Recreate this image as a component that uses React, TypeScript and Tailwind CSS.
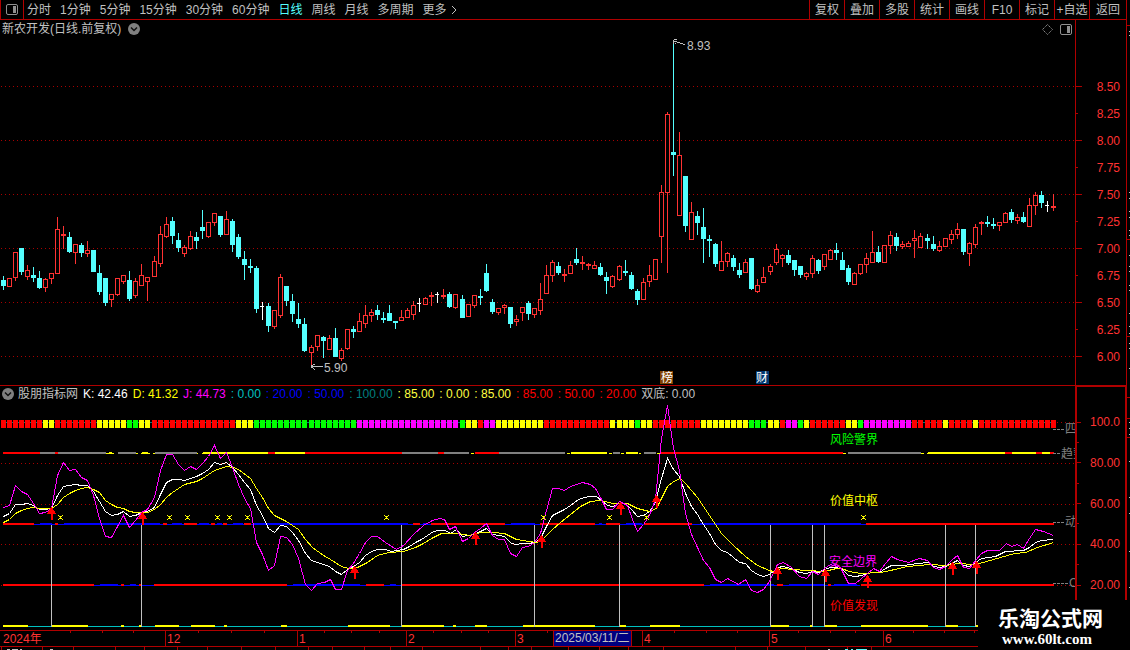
import { useState } from 'react';

type Kind = 'u' | 'd' | 'w';
type Candle = [Kind, number, number, number, number];
type Segment = [number, number, string];

const periods = ['分时', '1分钟', '5分钟', '15分钟', '30分钟', '60分钟', '日线', '周线', '月线', '多周期', '更多'];
const tools = ['复权', '叠加', '多股', '统计', '画线', 'F10', '标记', '+自选', '返回'];
const prices = ['8.50', '8.25', '8.00', '7.75', '7.50', '7.25', '7.00', '6.75', '6.50', '6.25', '6.00'];
const levels = ['100.0', '', '80.00', '', '60.00', '', '40.00', '', '20.00'];

const RED = '#ff3232';
const CYAN = '#54ffff';
const LINE = '#b00000';
const Y = '#ffff00';
const R = '#ff0000';
const B = '#0000ff';
const G = '#808080';

// kind, high, body top, body bottom, low
const candles: Candle[] = [
  ['d', 276, 280, 286, 290], ['u', 278, 278, 287, 287], ['u', 252, 252, 278, 281], ['d', 248, 248, 272, 275],
  ['u', 265, 270, 277, 280], ['d', 267, 275, 278, 282], ['d', 271, 278, 288, 289], ['u', 278, 279, 288, 292],
  ['u', 273, 273, 279, 284], ['u', 217, 229, 274, 274], ['u', 226, 234, 236, 249], ['d', 232, 237, 252, 253],
  ['u', 244, 244, 253, 264], ['d', 243, 245, 253, 257], ['u', 241, 250, 254, 257], ['d', 250, 250, 272, 272],
  ['d', 265, 273, 292, 295], ['d', 278, 278, 303, 306], ['u', 294, 294, 300, 307], ['u', 278, 278, 295, 296],
  ['u', 275, 275, 282, 284], ['d', 271, 280, 299, 301], ['u', 278, 281, 296, 298], ['u', 264, 275, 286, 286],
  ['u', 277, 277, 282, 301], ['u', 256, 261, 277, 277], ['u', 226, 234, 264, 267], ['u', 217, 224, 237, 238],
  ['d', 217, 221, 236, 244], ['d', 233, 240, 248, 252], ['u', 245, 247, 254, 257], ['u', 231, 236, 249, 250],
  ['d', 232, 237, 241, 249], ['d', 210, 227, 231, 239], ['u', 222, 222, 237, 238], ['u', 213, 213, 223, 226],
  ['d', 216, 216, 235, 237], ['u', 211, 219, 235, 235], ['d', 219, 221, 245, 252], ['d', 234, 237, 257, 259],
  ['d', 251, 259, 265, 280], ['d', 259, 266, 268, 273], ['d', 266, 268, 309, 313], ['w', 302, 306, 307, 320],
  ['d', 303, 306, 326, 332], ['u', 310, 310, 327, 329], ['u', 274, 277, 316, 318], ['d', 286, 286, 301, 306],
  ['d', 294, 301, 314, 322], ['d', 303, 319, 324, 328], ['d', 318, 324, 351, 352], ['u', 345, 347, 353, 366],
  ['u', 335, 335, 347, 351], ['d', 336, 337, 341, 358], ['u', 335, 338, 350, 350], ['d', 328, 338, 357, 357],
  ['u', 348, 350, 359, 361], ['u', 329, 329, 349, 350], ['d', 326, 329, 332, 338], ['u', 313, 321, 332, 332],
  ['u', 305, 315, 324, 328], ['u', 309, 312, 316, 322], ['d', 305, 310, 315, 320], ['d', 312, 318, 320, 323],
  ['d', 305, 313, 321, 321], ['d', 321, 321, 323, 329], ['u', 310, 317, 321, 321], ['u', 308, 310, 318, 318],
  ['u', 301, 305, 315, 320], ['w', 298, 303, 304, 312], ['u', 297, 298, 305, 305], ['u', 292, 295, 297, 306],
  ['w', 292, 294, 295, 303], ['u', 289, 295, 297, 299], ['d', 292, 294, 307, 308], ['u', 294, 294, 308, 309],
  ['d', 295, 299, 318, 318], ['u', 304, 304, 317, 317], ['u', 295, 295, 306, 308], ['d', 289, 296, 298, 305],
  ['d', 264, 273, 291, 292], ['d', 299, 302, 312, 314], ['u', 308, 308, 313, 315], ['u', 304, 305, 308, 314],
  ['d', 307, 307, 324, 328], ['u', 315, 319, 322, 326], ['u', 307, 307, 313, 321], ['d', 301, 303, 314, 320],
  ['u', 308, 308, 315, 318], ['u', 283, 299, 311, 315], ['u', 265, 275, 294, 294], ['u', 260, 262, 276, 282],
  ['d', 262, 266, 273, 275], ['u', 269, 274, 276, 282], ['u', 261, 265, 274, 274], ['d', 248, 259, 263, 265],
  ['u', 256, 262, 264, 270], ['u', 263, 264, 266, 270], ['u', 261, 265, 269, 269], ['d', 263, 267, 275, 276],
  ['d', 272, 277, 281, 294], ['u', 275, 276, 287, 288], ['u', 265, 266, 280, 281], ['d', 260, 271, 273, 276],
  ['d', 272, 275, 289, 290], ['d', 289, 291, 300, 305], ['u', 278, 282, 300, 300], ['u', 265, 275, 282, 287],
  ['u', 259, 259, 280, 280], ['u', 185, 192, 237, 263], ['u', 112, 114, 193, 273], ['d', 40, 152, 155, 176],
  ['u', 132, 155, 216, 216], ['d', 176, 176, 226, 232], ['u', 202, 212, 240, 240], ['d', 211, 216, 223, 235],
  ['d', 208, 227, 239, 263], ['d', 235, 239, 241, 257], ['d', 243, 244, 264, 267], ['u', 241, 261, 271, 271],
  ['u', 252, 253, 262, 267], ['d', 255, 258, 267, 271], ['d', 263, 270, 275, 278], ['u', 259, 262, 273, 273],
  ['d', 258, 258, 289, 290], ['u', 279, 285, 292, 293], ['u', 267, 277, 283, 283], ['u', 264, 266, 272, 275],
  ['u', 244, 249, 263, 265], ['u', 254, 255, 259, 267], ['d', 250, 255, 263, 265], ['d', 260, 260, 270, 276],
  ['d', 266, 266, 275, 278], ['u', 272, 273, 277, 280], ['u', 255, 258, 274, 278], ['d', 259, 260, 271, 274],
  ['u', 254, 254, 267, 270], ['u', 249, 250, 260, 260], ['d', 243, 250, 253, 260], ['d', 252, 260, 270, 270],
  ['d', 265, 268, 282, 285], ['u', 272, 273, 285, 285], ['u', 264, 264, 274, 275], ['u', 253, 258, 265, 273],
  ['u', 231, 252, 263, 263], ['d', 246, 252, 262, 263], ['u', 245, 245, 263, 263], ['u', 231, 235, 246, 254],
  ['d', 233, 237, 246, 251], ['u', 241, 244, 247, 249], ['u', 241, 243, 247, 247], ['u', 230, 238, 241, 258],
  ['u', 233, 236, 248, 248], ['d', 234, 238, 241, 249], ['d', 236, 244, 249, 251], ['u', 241, 246, 251, 252],
  ['u', 238, 238, 247, 247], ['u', 230, 234, 240, 244], ['u', 223, 229, 235, 239], ['d', 229, 229, 252, 255],
  ['u', 242, 243, 254, 266], ['u', 224, 227, 245, 248], ['u', 221, 222, 224, 235], ['d', 216, 222, 224, 227],
  ['d', 218, 224, 226, 229], ['u', 222, 222, 226, 231], ['u', 212, 213, 223, 223], ['d', 209, 212, 220, 223],
  ['u', 214, 217, 221, 224], ['d', 212, 217, 222, 223], ['u', 198, 205, 227, 227], ['u', 192, 195, 206, 215],
  ['d', 191, 195, 203, 208], ['w', 201, 205, 206, 212], ['u', 194, 206, 208, 211],
];

// run lengths of the four-colour ribbon, one block per candle
const ribbonRuns =
  '7r 2y 7r 5y 2g 2y 14r 3y 17g 17m 1g 2y 1r 2m 8y 11r 4y 1g 2y 8r 8y 3g 2y 1r 2m 1g 1y 6r 2y 1g 8m 5r 1y 4r 1y 13r';
const ribbonColors: Record<string, string> = { r: R, y: Y, g: '#00ff00', m: '#ff00ff' };
const ribbon = ribbonRuns
  .split(' ')
  .flatMap((run) => Array<string>(parseInt(run)).fill(ribbonColors[run[run.length - 1]]));

const trend: Segment[] = [
  [3, 40, R], [40, 55, G], [55, 58, R], [58, 106, G], [109, 112, Y], [118, 136, G], [142, 148, Y], [155, 197, G],
  [203, 268, Y], [268, 275, R], [275, 305, Y], [305, 402, R], [402, 438, G], [438, 444, R], [444, 469, G],
  [475, 499, R], [499, 565, G], [571, 607, Y], [613, 620, G], [626, 638, Y], [644, 656, G], [661, 843, R],
  [848, 921, G], [928, 1005, Y], [1005, 1012, R], [1012, 1036, Y], [1036, 1042, R], [1042, 1050, Y], [1050, 1054, R],
];
const trendThin: Segment[] = [
  [106, 114, Y], [136, 138, Y], [141, 150, Y], [153, 155, Y], [197, 198, Y], [202, 204, Y], [471, 474, Y],
  [567, 570, Y], [609, 612, Y], [621, 624, Y], [639, 641, Y], [657, 660, Y], [843, 846, Y], [921, 924, Y], [927, 929, Y],
];
const middle: Segment[] = [
  [3, 34, R], [40, 52, B], [55, 58, R], [64, 160, B], [163, 167, R], [172, 182, B], [184, 197, R], [199, 209, B],
  [211, 215, R], [217, 222, B], [223, 227, R], [233, 243, B], [244, 251, R], [253, 408, B], [413, 420, R],
  [423, 427, B], [431, 505, R], [511, 535, B], [540, 595, R], [599, 602, B], [606, 620, R], [626, 642, B],
  [644, 692, R], [700, 861, B], [866, 1054, R],
];
const safety: Segment[] = [
  [3, 94, R], [100, 118, B], [121, 124, R], [130, 136, B], [139, 142, R], [154, 287, R], [293, 360, B],
  [366, 384, R], [390, 396, B], [402, 704, R], [710, 774, B], [777, 783, R], [789, 825, B], [828, 831, R],
  [834, 857, B], [861, 1054, R],
];
const base: Segment[] = [
  [3, 28, Y], [52, 88, Y], [121, 124, Y], [139, 142, Y], [155, 179, Y], [191, 215, Y], [224, 227, Y], [281, 287, Y],
  [348, 390, Y], [401, 444, Y], [453, 456, Y], [475, 487, Y], [523, 595, Y], [620, 626, Y], [650, 680, Y],
  [771, 789, Y], [810, 812, Y], [825, 837, Y], [861, 928, Y], [946, 958, Y], [976, 978, Y],
];

const kLine =
  '3,516 9,513 15,504 21,504 27,503 33,505 39,509 45,509 51,508 57,495 63,486 69,485 75,484 81,485 87,485 93,491 99,501 105,511 111,515 117,514 123,511 129,516 135,515 141,512 147,511 154,507 160,494 166,482 172,479 178,479 184,480 190,478 196,476 202,473 208,469 214,462 220,464 226,462 232,467 238,474 244,482 250,489 256,505 262,515 268,528 274,532 280,525 286,526 292,532 298,540 305,553 311,560 317,562 323,564 329,566 335,571 341,574 347,569 353,566 359,562 365,555 371,551 377,549 385,549 391,551 397,550 403,549 409,546 415,542 421,539 427,535 433,531 439,530 445,530 450,533 456,529 462,536 468,535 474,534 480,531 486,528 492,534 498,535 504,536 511,543 516,544 522,543 528,543 534,542 540,538 546,526 552,515 558,512 564,509 570,505 578,499 584,497 590,496 596,496 601,500 607,505 612,506 619,503 625,503 631,509 637,516 643,515 649,511 655,502 661,478 667,458 673,469 679,476 685,493 691,506 697,514 703,524 709,533 715,544 721,550 727,552 733,557 739,562 745,563 751,570 757,574 763,576 769,574 775,569 781,566 787,567 793,569 799,572 806,573 812,571 818,572 824,569 830,567 836,567 842,569 848,575 855,576 861,575 867,573 873,572 879,572 885,568 891,565 903,565 917,563 929,562 933,566 939,567 945,566 951,563 957,560 963,565 969,566 975,562 981,558 988,557 995,556 1005,551 1023,550 1029,547 1035,542 1041,540 1053,539';
const dLine =
  '3,522 9,519 15,513 21,510 27,508 33,507 39,508 51,508 57,504 63,497 69,493 75,490 81,488 87,487 93,489 99,492 105,500 111,504 117,507 123,508 129,511 135,512 147,512 154,509 160,504 166,497 172,492 184,484 196,481 202,478 214,470 226,466 233,467 238,469 250,478 256,488 262,497 268,508 274,515 286,521 298,529 305,539 312,547 323,555 330,559 341,566 348,568 357,567 367,562 377,555 388,552 403,551 415,547 423,543 433,537 441,533 457,533 469,535 480,532 493,532 504,533 516,539 528,541 537,542 543,538 552,529 560,522 570,514 580,506 590,501 600,500 613,503 627,503 637,508 649,511 656,508 661,498 667,486 673,481 680,478 685,483 697,497 709,515 721,533 733,545 745,556 757,565 769,570 773,571 781,568 793,569 806,570 824,571 836,568 841,568 849,571 860,573 880,572 890,570 907,566 929,564 945,565 958,563 973,564 979,563 993,559 1014,553 1025,552 1037,547 1053,542';
const jLine =
  '3,507 9,505 15,485 21,491 27,494 33,503 39,513 45,512 51,508 57,475 63,462 69,470 75,469 81,477 87,480 93,495 99,518 105,536 111,537 117,526 123,515 129,527 135,520 141,512 147,509 154,497 160,470 166,454 172,454 178,464 184,470 190,466 196,469 202,463 208,456 214,445 220,458 226,452 232,467 238,484 244,498 250,508 256,542 262,554 268,570 274,565 280,536 286,537 292,544 298,558 305,584 311,590 317,583 324,582 330,579 335,589 341,589 347,570 353,563 359,553 365,542 371,536 377,536 385,542 396,549 403,545 413,534 423,525 432,520 439,518 444,519 449,529 455,526 462,541 468,538 474,532 480,528 486,523 492,535 498,539 504,539 510,553 516,556 522,547 528,546 534,542 540,533 546,510 552,488 558,488 564,490 570,486 582,482 590,484 595,488 601,499 606,509 612,509 619,501 627,505 632,519 637,531 643,524 649,515 655,499 661,438 667,405 673,448 679,470 685,513 691,534 703,560 709,567 715,579 721,582 727,578 738,584 745,579 751,590 757,592 763,589 769,581 777,564 783,562 791,567 799,576 806,578 812,571 818,574 824,568 830,564 840,567 848,583 855,583 867,573 873,568 879,571 885,563 891,556 897,559 908,562 919,558 927,560 933,567 939,569 945,566 951,560 957,555 963,567 969,568 975,560 981,553 987,550 999,550 1006,543 1011,546 1017,544 1023,548 1029,538 1035,529 1043,531 1053,535';

const signalBars = [51, 141, 401, 534, 619, 770, 812, 824, 945, 975];
const crosses = [60, 169, 187, 217, 229, 247, 386, 543, 609, 646, 863];
const arrows = [
  [51, 507], [142, 512], [354, 566], [475, 532], [541, 535], [620, 502],
  [656, 495], [777, 567], [825, 569], [867, 575], [952, 562], [976, 561],
];

const readings = [
  { text: 'K: 42.46', className: 'text-white' },
  { text: 'D: 41.32', className: 'text-[#ffff00]' },
  { text: 'J: 44.73', className: 'text-[#ff00ff]' },
  { text: ': 0.00', className: 'text-[#00c0c0]' },
  { text: ': 20.00', className: 'text-[#0000ff]' },
  { text: ': 50.00', className: 'text-[#0000ff]' },
  { text: ': 100.00', className: 'text-[#008080]' },
  { text: ': 85.00', className: 'text-[#ffff40]' },
  { text: ': 0.00', className: 'text-[#ffff40]' },
  { text: ': 85.00', className: 'text-[#ffff40]' },
  { text: ': 85.00', className: 'text-[#ff0000]' },
  { text: ': 50.00', className: 'text-[#ff0000]' },
  { text: ': 20.00', className: 'text-[#ff0000]' },
  { text: '双底: 0.00', className: 'text-[#c0c0c0]' },
];

const months: [number, string][] = [[165, '12'], [297, '1'], [406, '2'], [515, '3'], [642, '4'], [769, '5'], [883, '6']];
const weekTicks = [70, 102, 133, 198, 231, 264, 324, 351, 379, 433, 461, 488, 547, 674, 706, 737, 798, 830, 855, 913, 944, 974];
const lowerTicks = [
  1, 42, 73, 115, 144, 177, 207, 241, 275, 308, 332, 364, 390, 422, 480, 508, 531, 568, 599, 628, 663, 735, 767, 805, 847, 871,
];

// candles sit 6 apart, with one extra unit about every 25 of them
const candleX = (i: number) => 3 + 6 * i + Math.floor(((i + 1) * 5) / 128);

function PanelIcon() {
  return (
    <svg width="12" height="11" viewBox="0 0 12 11" fill="none" aria-hidden="true">
      <rect x="0.5" y="0.5" width="11" height="10" rx="1.5" stroke="#909090" />
      <rect x="7" y="2" width="3" height="7" fill="#909090" />
    </svg>
  );
}

function CollapseIcon() {
  return (
    <svg width="12" height="12" viewBox="0 0 12 12" fill="none" aria-hidden="true">
      <circle cx="6" cy="6" r="6" fill="#808080" />
      <path d="M3 4.5 6 7.5 9 4.5" stroke="#101010" strokeWidth="1.5" />
    </svg>
  );
}

function GridLines({ rows }: { rows: number[] }) {
  return (
    <>
      {rows.map((y) => (
        <line key={y} x1="1" x2="1075" y1={y + 0.5} y2={y + 0.5} stroke="#a80000" strokeDasharray="1 3" />
      ))}
    </>
  );
}

function Band({ y, height, segments }: { y: number; height: number; segments: Segment[] }) {
  return (
    <>
      {segments.map(([from, to, fill]) => (
        <rect key={from} x={from} y={y} width={to - from} height={height} fill={fill} />
      ))}
    </>
  );
}

function CandleShape({ candle, x }: { candle: Candle; x: number }) {
  const [kind, high, top, bottom, low] = candle;
  if (kind === 'u') {
    const tall = bottom - top > 2;
    return (
      <g fill={RED}>
        <rect x={x} y={high} width="1" height={top - high} />
        <rect x={x} y={bottom} width="1" height={low - bottom} />
        {tall ? (
          <rect x={x - 1.5} y={top + 0.5} width="4" height={bottom - top - 1} fill="none" stroke={RED} />
        ) : (
          <rect x={x - 2} y={top} width="5" height="2" />
        )}
      </g>
    );
  }
  return (
    <g fill={kind === 'd' ? CYAN : '#ffffff'}>
      <rect x={x} y={high} width="1" height={low - high} />
      <rect x={x - 2} y={top} width={kind === 'd' ? 5 : 4} height={bottom - top} />
    </g>
  );
}

function PriceChart() {
  return (
    <svg viewBox="0 38 1075 347" className="block w-full" shapeRendering="crispEdges" role="img" aria-label="日线">
      <GridLines rows={[86, 140, 194, 248, 302, 356]} />
      {candles.map((candle, i) => (
        <CandleShape key={i} candle={candle} x={candleX(i)} />
      ))}
      <g stroke="#c0c0c0" fill="none">
        <path d="M674 39.5h3M673 41.5h4M673 40v4M675 43.5h1M677 42.5h3M680 43.5h3M683 44.5h2" />
        <path d="M311 366.5h12M311 365.5h2M311 367.5h2M313 364.5h2M313 368.5h1M314 369.5h1" />
      </g>
      <g fontSize="12" fill="#c0c0c0">
        <text x="687" y="50">8.93</text>
        <text x="324" y="372">5.90</text>
      </g>
      <rect x="660" y="371" width="13" height="13" fill="#804000" />
      <rect x="756" y="371" width="13" height="13" fill="#003870" />
      <g fontSize="12" fill="#ffffff">
        <text x="661" y="382">榜</text>
        <text x="756" y="382">财</text>
      </g>
    </svg>
  );
}

function IndicatorChart() {
  return (
    <svg viewBox="0 402 1075 228" className="block w-full" shapeRendering="crispEdges" role="img" aria-label="股朋指标网">
      <GridLines rows={[422, 463, 504, 544, 585]} />
      <rect x="3" y="422" width="1050" height="1" fill="#008080" />
      {ribbon.map((fill, i) => (
        <rect key={i} x={candleX(i) - 2} y="420" width="5" height="8" fill={fill} />
      ))}

      <Band y={453} height={1} segments={trendThin} />
      <Band y={452} height={2} segments={trend} />
      <rect x="34" y="524" width="832" height="1" fill={B} />
      <Band y={523} height={2} segments={middle} />
      <rect x="94" y="585" width="766" height="1" fill={B} />
      <Band y={584} height={2} segments={safety} />
      <rect x="3" y="626" width="975" height="1" fill="#00c0c0" />
      <Band y={625} height={2} segments={base} />

      {signalBars.map((x) => (
        <rect key={x} x={x} y="525" width="1" height="102" fill="#c0c0c0" />
      ))}

      <g fill="none" transform="translate(0.5 0.5)">
        <polyline points={kLine} stroke="#ffffff" />
        <polyline points={dLine} stroke={Y} />
        <polyline points={jLine} stroke="#ff00ff" />
      </g>

      {crosses.map((x) => (
        <path key={x} d={`M${x - 2} 515h1v1h3v-1h1v1h-1v1h-1v1h1v1h1v1h-1v-1h-3v1h-1v-1h1v-1h1v-1h-1v-1h-1z`} fill={Y} />
      ))}
      {arrows.map(([x, y]) => (
        <path key={x} d={`M${x + 0.5} ${y}l5 7h-4v6h-2v-6h-4z`} fill={R} />
      ))}

      <g fontSize="12">
        <text x="830" y="444" fill="#00ff00">风险警界</text>
        <text x="830" y="505" fill={Y}>价值中枢</text>
        <text x="829" y="566" fill="#ff00ff">安全边界</text>
        <text x="830" y="610" fill={R}>价值发现</text>
      </g>
      <g fontSize="12" fill={G}>
        <text x="1065" y="433">四</text>
        <text x="1061" y="458">趋势</text>
        <text x="1065" y="526">动</text>
        <text x="1069" y="587">C</text>
      </g>
      <g stroke={G} strokeDasharray="3 1">
        <line x1="1053" x2="1064" y1="429.5" y2="429.5" />
        <line x1="1053" x2="1060" y1="453.5" y2="453.5" />
        <line x1="1053" x2="1064" y1="522.5" y2="522.5" />
        <line x1="1053" x2="1068" y1="583.5" y2="583.5" />
      </g>
    </svg>
  );
}

function TimeAxis() {
  return (
    <svg viewBox="0 630 1126 20" className="block w-full" shapeRendering="crispEdges" role="img" aria-label="2025/03/11/二">
      <rect x="0" y="630" width="1126" height="1" fill={LINE} />
      <rect x="0" y="646" width="1126" height="1" fill={LINE} />
      {months.map(([x]) => (
        <rect key={x} x={x} y="630" width="1" height="16" fill={LINE} />
      ))}
      {weekTicks.map((x) => (
        <rect key={x} x={x} y="631" width="1" height="2" fill={LINE} />
      ))}
      {lowerTicks.map((x) => (
        <rect key={x} x={x} y="647" width="1" height="3" fill={LINE} />
      ))}
      <g fontSize="12" fill={RED}>
        <text x="3" y="643">2024年</text>
        {months.map(([x, label]) => (
          <text key={x} x={x + 2} y="643">{label}</text>
        ))}
      </g>
      <rect x="553.5" y="630.5" width="78" height="16" fill="#000080" stroke={LINE} />
      <text x="555" y="642" fontSize="12" fill="#c0c0c0">2025/03/11/二</text>
      <path d="M7 649.5h3M12 649.5h6M20 649.5h2M50 649.5h3M828 649.5h2M856 649.5h11" stroke="#c0c0c0" />
      <path d="M845 649.5h3M851 649.5h2M857 649.5h9" stroke={CYAN} />
    </svg>
  );
}

function SideStrip() {
  const lines = [25, 239, 336, 397, 418, 437];
  const marks = [31, 35, 192, 198, 211, 217, 230, 235, 255, 266, 271, 285, 290, 313, 326, 333, 343, 348, 368, 422, 428, 434, 461, 497, 513, 551, 587];
  return (
    <aside className="w-1 shrink-0 overflow-hidden border-l border-[#b00000]">
      <svg width="3" height="600" viewBox="0 0 3 600" shapeRendering="crispEdges" aria-hidden="true">
        {lines.map((y) => (
          <rect key={y} x="0" y={y} width="3" height="1" fill={LINE} />
        ))}
        {marks.map((y) => (
          <rect key={y} x="2" y={y} width="1" height="1" fill="#c0c0c0" />
        ))}
      </svg>
    </aside>
  );
}

export default function App() {
  const [period, setPeriod] = useState('日线');

  return (
    <div className="relative flex min-h-screen w-full overflow-hidden bg-black font-['Liberation_Sans','Noto_Sans_CJK_SC',sans-serif] text-[12px] leading-4 text-[#c0c0c0]">
      <main className="flex min-w-0 flex-1 flex-col">
        <header className="flex h-5 items-stretch border-b border-[#b00000]">
          <button className="flex w-6 items-center justify-center border-x border-[#b00000]" aria-label="侧栏">
            <PanelIcon />
          </button>
          <nav className="flex items-center gap-[9px] pl-[3px] whitespace-nowrap">
            {periods.map((name) => (
              <button
                key={name}
                onClick={() => setPeriod(name)}
                className={name === period ? 'text-[#54ffff]' : 'hover:text-white'}
              >
                {name}
              </button>
            ))}
          </nav>
          <svg width="6" height="10" viewBox="0 0 6 10" fill="none" className="ml-1 self-center" aria-hidden="true">
            <path d="M1 1l4 4-4 4" stroke="#c0c0c0" />
          </svg>
          <div className="ml-auto flex whitespace-nowrap">
            {tools.map((name) => (
              <button
                key={name}
                className="flex w-[35px] items-center justify-center border-l border-[#b00000] last:w-[37px] hover:text-white"
              >
                {name}
              </button>
            ))}
          </div>
        </header>

        <section className="flex border-b border-[#b00000]">
          <div className="min-w-0 flex-1">
            <div className="flex h-[18px] items-center gap-[7px] pr-[3px] pl-[2px]">
              <h1>新农开发(日线.前复权)</h1>
              <button aria-label="展开">
                <CollapseIcon />
              </button>
              <div className="ml-auto flex items-center gap-[7px]">
                <svg width="11" height="11" viewBox="0 0 11 11" fill="none" aria-hidden="true">
                  <path d="M5.5 0.5l5 5-5 5-5-5z" stroke="#909090" strokeDasharray="1.4 0.8" />
                </svg>
                <button aria-label="面板">
                  <PanelIcon />
                </button>
              </div>
            </div>
            <PriceChart />
          </div>
          <div className="w-[51px] shrink-0 border-l border-[#b00000] pt-[53px] text-[#ff3232]">
            {prices.map((price, i) => (
              <div key={price} className="flex h-[27px] items-center justify-between pr-1.5">
                <span className={i % 2 === 0 ? 'h-px w-1.5 bg-[#b00000]' : 'h-px w-0.5 bg-[#b00000]'} />
                <span>{price}</span>
              </div>
            ))}
          </div>
        </section>

        <section className="flex">
          <div className="min-w-0 flex-1">
            <div className="flex h-4 items-center gap-[5px] pl-[2px] whitespace-nowrap">
              <button className="flex items-center gap-1">
                <CollapseIcon />
                股朋指标网
              </button>
              {readings.map(({ text, className }, i) => (
                <span key={i} className={className}>{text}</span>
              ))}
            </div>
            <IndicatorChart />
          </div>
          <div className="w-[51px] shrink-0 border-t border-r border-l-2 border-[#b00000] pt-[27px] text-[#ff3232]">
            <div className="flex h-[179px] flex-col justify-between">
              {levels.map((level, i) => (
                <div key={i} className="flex h-4 items-center justify-between pr-[5px]">
                  <span className={level ? 'h-px w-1 bg-[#b00000]' : 'h-px w-0.5 bg-[#b00000]'} />
                  <span>{level}</span>
                </div>
              ))}
            </div>
          </div>
        </section>

        <TimeAxis />
      </main>

      <SideStrip />

      <a
        href="http://www.60lt.com"
        className="absolute right-0 bottom-0 flex h-[50px] w-[152px] flex-col items-start bg-black pt-[7px] pl-5 text-white"
      >
        <span className="text-[21px] leading-6 font-bold">乐淘公式网</span>
        <span className="pl-1 font-['Liberation_Serif',serif] text-[15px] leading-4 font-bold">www.60lt.com</span>
      </a>
    </div>
  );
}
